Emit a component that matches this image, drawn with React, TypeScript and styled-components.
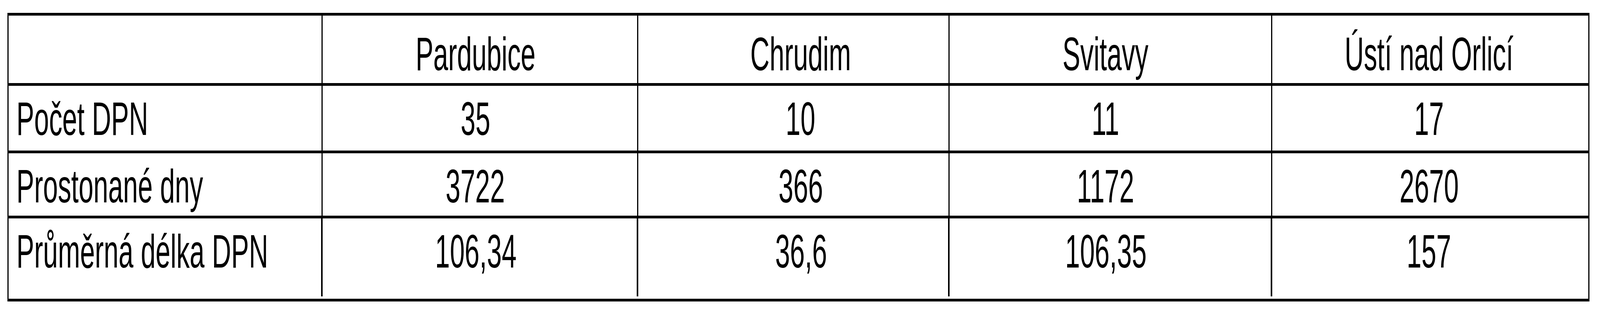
import styled, { createGlobalStyle } from 'styled-components';

// the table was laid out for a 7267px wide window; --sx squeezes it horizontally
// when the browser gives us a narrower one
const DESIGN_WIDTH = 7267;
const COLS = [1427, 1433, 1414, 1466, 1440];

const GlobalStyle = createGlobalStyle`
	body {
		margin: 0;
		background: #fff;
	}
`;

const Page = styled.div`
	padding: 33px 0 0 calc(33px * var(--sx));
	font-family: 'Liberation Sans', Arial, sans-serif;
	color: #000;
	overflow: hidden;
`;

const StyledTable = styled.div`
	display: grid;
	grid-template-columns: ${COLS.map(c => `calc(${c}px * var(--sx))`).join(' ')};
	grid-template-rows: 180px 173px 167px 213px;
	width: max-content;
	border-left: calc(7px * var(--sx)) solid #000;
	border-top: 7px solid #000;
`;

type CellProps = {
	$head?: boolean;
	$label?: boolean;
	$shift?: number;
	$lastRow?: boolean;
	$lastCol?: boolean;
};

const Cell = styled.div<CellProps>`
	box-sizing: border-box;
	border-bottom: 7px solid #000;
	border-right: ${props =>
		props.$lastRow && !props.$lastCol ? '0' : 'calc(7px * var(--sx)) solid #000'};
	background: ${props =>
		props.$lastRow && !props.$lastCol
			? 'linear-gradient(#000, #000) right top / calc(7px * var(--sx)) calc(100% - 6px) no-repeat'
			: 'none'};
	padding-top: ${props => (props.$head ? 28 : 14)}px;
	padding-left: calc(
		${props => (props.$label ? 37 : Math.max(0, (props.$shift ?? 0) * 2))}px * var(--sx)
	);
	padding-right: calc(${props => Math.max(0, -(props.$shift ?? 0) * 2)}px * var(--sx));
	white-space: nowrap;
	text-align: ${props => (props.$label ? 'left' : 'center')};
`;

const Text = styled.span<{ $label?: boolean }>`
	display: inline-block;
	font-size: 121px;
	line-height: 140px;
	transform: scaleX(var(--sx));
	transform-origin: ${props => (props.$label ? 'left' : 'center')} center;
`;

const districts = [
	{ name: 'Pardubice', shift: -20 },
	{ name: 'Chrudim', shift: 34 },
	{ name: 'Svitavy', shift: -22 },
	{ name: 'Ústí nad Orlicí', shift: -5 },
];

const rows = [
	{ label: 'Počet DPN', values: ['35', '10', '11', '17'] },
	{ label: 'Prostonané dny', values: ['3722', '366', '1172', '2670'] },
	{ label: 'Průměrná délka DPN', values: ['106,34', '36,6', '106,35', '157'] },
];

function App() {
	const sx = Math.min(1, window.innerWidth / DESIGN_WIDTH);
	return (
		<Page style={{ '--sx': sx } as React.CSSProperties}>
			<GlobalStyle />
			<StyledTable>
				<Cell $head $label />
				{districts.map((d, i) => (
					<Cell key={d.name} $head $shift={d.shift} $lastCol={i === districts.length - 1}>
						<Text>{d.name}</Text>
					</Cell>
				))}
				{rows.map((row, r) => {
					const lastRow = r === rows.length - 1;
					return [
						<Cell key={row.label} $label $lastRow={lastRow}>
							<Text $label>{row.label}</Text>
						</Cell>,
						...row.values.map((v, i) => (
							<Cell
								key={row.label + i}
								$shift={districts[i].shift}
								$lastRow={lastRow}
								$lastCol={i === row.values.length - 1}
							>
								<Text>{v}</Text>
							</Cell>
						)),
					];
				})}
			</StyledTable>
		</Page>
	);
}

export default App;
